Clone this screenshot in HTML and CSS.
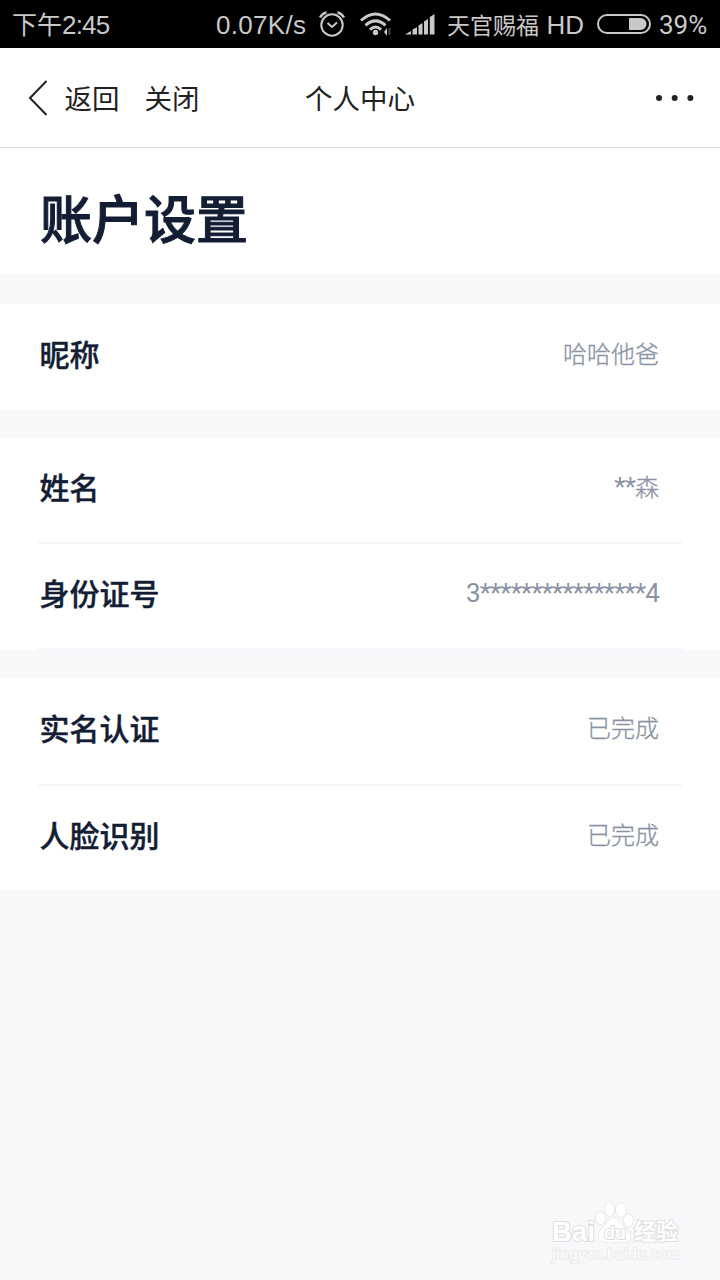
FILE: index.html
```html
<!DOCTYPE html>
<html lang="zh-CN">
<head>
  <meta charset="UTF-8">
  <meta name="viewport" content="width=device-width, initial-scale=1.0">
  <title>个人中心</title>
  <link rel="stylesheet" href="styles.css">
</head>
<body>
  <div class="status-bar">
    <span class="time">下午<span class="clock">2:45</span></span>
    <span class="speed">0.07K/s</span>
    <svg class="alarm" width="26" height="26" viewBox="0 0 26 26" fill="none" stroke="#c9c9c9">
      <circle cx="13" cy="14" r="10.7" stroke-width="2"/>
      <path d="M8.5 12l4.500 4 5-4.500" stroke-width="2"/>
      <path d="M1 6.500Q3 2.500 7.500 1.300M25 6.500Q23 2.500 18.500 1.300" stroke-width="2.400"/>
    </svg>
    <svg class="wifi" width="32" height="24" viewBox="0 0 32 24" fill="none" stroke="#c9c9c9" stroke-width="3">
      <path d="M1 8.500Q15.500-4.500 30 8.500"/>
      <path d="M5.500 13.300Q15.500 4.500 25.500 13.300"/>
      <path d="M10 17.600Q15.500 12.500 21 17.600"/>
      <circle cx="15.500" cy="20.500" r="2.700" fill="#c9c9c9" stroke="none"/>
      <path d="M24 20l3-4v8z" fill="#c9c9c9" stroke="none"/>
      <path d="M29.500 16v7" stroke="#444" stroke-width="2"/>
    </svg>
    <svg class="signal" width="30" height="21" viewBox="0 0 30 21" fill="#c9c9c9">
      <path d="M0 20.500l6-3.500v3.500zM7.500 15.500l4.500-2.300v7.300H7.500zM13.500 11.500l4-2.500v11.500h-4zM19 7.500L23 5v15.500h-4zM24.800 3L29.500 0v20.500h-4.700z"/>
    </svg>
    <span class="carrier">天官赐福 <span class="hd">HD</span></span>
    <svg class="battery" width="54" height="20" viewBox="0 0 54 20">
      <rect x="1" y="1" width="52" height="18" rx="9" fill="none" stroke="#c9c9c9" stroke-width="2"/>
      <path d="M32 4h11.500a6 6 0 0 1 0 12H32z" fill="#c9c9c9"/>
    </svg>
    <span class="percent">39%</span>
  </div>

  <div class="navbar">
    <div class="nav-left">
      <svg class="back-icon" width="20" height="36" viewBox="0 0 20 36" fill="none" stroke="#222" stroke-width="2">
        <path d="M18.500 1L2 18l16.500 17"/>
      </svg>
      <span class="nav-text">返回</span>
      <span class="nav-text">关闭</span>
    </div>
    <div class="nav-title">个人中心</div>
    <svg class="more" width="40" height="8" viewBox="0 0 40 8" fill="#222">
      <circle cx="4" cy="4" r="3"/>
      <circle cx="19.700" cy="4" r="3"/>
      <circle cx="35.400" cy="4" r="3"/>
    </svg>
  </div>

  <h1 class="page-title">账户设置</h1>

  <div class="group">
    <div class="row">
      <span class="label">昵称</span>
      <span class="value">哈哈他爸</span>
    </div>
  </div>

  <div class="group">
    <div class="row line">
      <span class="label">姓名</span>
      <span class="value"><span class="masked">**</span>森</span>
    </div>
    <div class="row line">
      <span class="label">身份证号</span>
      <span class="value masked">3****************4</span>
    </div>
  </div>

  <div class="group verify">
    <div class="row line">
      <span class="label">实名认证</span>
      <span class="value">已完成</span>
    </div>
    <div class="row">
      <span class="label">人脸识别</span>
      <span class="value">已完成</span>
    </div>
  </div>

  <div class="watermark">
    <div class="wm-brand">
      <span class="wm-bai">Bai</span>
      <span class="wm-paw">
        <svg width="40" height="44" viewBox="0 0 40 44" fill="#fff" stroke="#dedfe1" stroke-width="1.200">
          <ellipse cx="6.500" cy="17" rx="4.700" ry="6.300"/>
          <ellipse cx="15.500" cy="8" rx="4.800" ry="7"/>
          <ellipse cx="27" cy="9" rx="5.200" ry="7"/>
          <ellipse cx="34.500" cy="19.500" rx="4.500" ry="6.300"/>
          <path d="M19.500 17c5 0 7 4 10.500 8s7.500 7 6.500 12c-1 4-4 4-8 4H12c-4 0-7-1.500-7.500-5.500-.5-4.500 3.500-8 6.500-11.500s4.500-7 8.500-7z"/>
        </svg>
        <span class="wm-du">du</span>
      </span>
      <span class="wm-jy">经验</span>
    </div>
    <div class="wm-url">jingyan.baidu.com</div>
  </div>
</body>
</html>
```

FILE: styles.css
```css
* {
  box-sizing: border-box;
}

body {
  margin: 0;
  min-height: 1280px;
  background-color: #f7f8fa;
  font-family: Roboto, "Noto Sans CJK SC", sans-serif;
  overflow: hidden;
}

svg {
  display: block;
  flex: none;
}

.status-bar {
  display: flex;
  align-items: center;
  height: 48px;
  padding: 0 12px;
  background-color: #000;
  color: #c9c9c9;
  font-family: "Liberation Sans", "Noto Sans CJK SC", sans-serif;
  font-size: 26px;
  line-height: 48px;
  white-space: nowrap;
}

.time {
  width: 204px;
  font-family: "Noto Sans CJK SC", sans-serif;
  font-size: 25px;
}

.clock {
  font-family: "Liberation Sans", sans-serif;
  font-size: 26px;
  letter-spacing: -0.8px;
}

.speed {
  width: 103px;
  padding-top: 2px;
  letter-spacing: 0.3px;
}

.wifi {
  margin-left: 15px;
}

.signal {
  margin-left: 13px;
}

.carrier {
  width: 138px;
  margin-left: 12px;
  padding-top: 3px;
  font-size: 23px;
}

.hd {
  margin-left: 1px;
  font-size: 26px;
}

.battery {
  margin-left: 12px;
}

.percent {
  margin-left: 8px;
  padding-top: 1px;
  font-family: Roboto, sans-serif;
  font-size: 26px;
}

.navbar {
  display: grid;
  grid-template-columns: 1fr auto 1fr;
  align-items: center;
  height: 100px;
  padding: 0 27px 0 28px;
  background-color: #fff;
  border-bottom: 1px solid #dcdcdc;
  color: #222;
  font-size: 27.500px;
}

.nav-left {
  display: flex;
  align-items: center;
}

.nav-text {
  margin-left: 16.500px;
}

.nav-text + .nav-text {
  margin-left: 25px;
}

.nav-title {
  margin-left: -1px;
}

.nav-text,
.nav-title {
  padding-bottom: 1px;
}

.more {
  justify-self: end;
  margin-right: -2px;
}

.page-title {
  height: 126px;
  margin: 0;
  padding-left: 40px;
  background-color: #fff;
  color: #131d34;
  font-size: 52px;
  font-weight: 500;
  line-height: 148px;
  -webkit-text-stroke: 1px #131d34;
}

.group {
  margin-top: 28px;
  background-color: #fff;
}

.page-title + .group {
  margin-top: 30px;
}

.row {
  display: flex;
  justify-content: space-between;
  align-items: center;
  height: 106px;
  margin: 0 38px;
  padding: 0 23px 9px 1.500px;
}

.line {
  border-bottom: 2px solid #f5f6f9;
}

.label {
  color: #131d34;
  font-size: 30px;
  font-weight: 500;
  -webkit-text-stroke: 0.4px #131d34;
}

.value {
  color: #8a92a3;
  font-size: 24px;
  font-weight: 300;
  -webkit-text-stroke: 0.3px #8a92a3;
}

.masked {
  font-size: 26px;
  font-weight: 400;
  letter-spacing: -0.85px;
  -webkit-text-stroke: 0;
}

.row > .masked {
  padding-top: 2px;
}

.verify .row {
  height: 104px;
}

.verify .line {
  height: 108px;
}

.watermark {
  position: absolute;
  left: 552px;
  top: 1201px;
  color: #fff;
  font-family: "Liberation Sans", "Noto Sans CJK SC", sans-serif;
}

.wm-brand {
  display: flex;
  align-items: flex-end;
  height: 44px;
  font-weight: bold;
  -webkit-text-stroke: 2px #dedfe1;
  paint-order: stroke fill;
}

.wm-bai {
  width: 42px;
  font-size: 27.500px;
  line-height: 27px;
}

.wm-paw {
  position: relative;
}

.wm-du {
  position: absolute;
  left: 10px;
  top: 22px;
  font-size: 18px;
  line-height: 20px;
}

.wm-jy {
  font-size: 22px;
  line-height: 26px;
}

.wm-url {
  font-family: "Noto Sans", sans-serif;
  font-size: 14.800px;
  line-height: 16px;
  -webkit-text-stroke: 1.600px #e6e7e9;
  paint-order: stroke fill;
}
```
